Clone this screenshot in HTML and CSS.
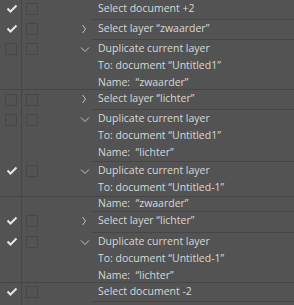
FILE: index.html
```html
<!DOCTYPE html>
<html lang="en">
<head>
    <meta charset="UTF-8">
    <title>Actions</title>
    <link rel="stylesheet" href="styles.css">
</head>
<body>
    <div class="panel">
        <div class="row">
            <div class="chk"><svg class="tick" width="12" height="10" viewBox="0 0 12 10"><polyline points="1.5,4.5 4.5,7.5 10.5,1.5"/></svg></div>
            <div class="mark"><span class="box b2"></span></div>
            <div class="tog"></div>
            <div class="body h19"><div class="line">Select document +2</div></div>
        </div>
        <div class="row">
            <div class="chk"><svg class="tick" width="12" height="10" viewBox="0 0 12 10"><polyline points="1.5,4.5 4.5,7.5 10.5,1.5"/></svg></div>
            <div class="mark"><span class="box b2"></span></div>
            <div class="tog"><svg class="chev" width="8" height="10" viewBox="0 0 8 10"><polyline points="3.5,1 6.5,5 3.5,9"/></svg></div>
            <div class="body h19"><div class="line">Select layer “zwaarder”</div></div>
        </div>
        <div class="row full">
            <div class="chk"><span class="box b1"></span></div>
            <div class="mark"><span class="box b2"></span></div>
            <div class="tog"><svg class="chev" width="10" height="8" viewBox="0 0 10 8"><polyline points="1,1.5 5,5.5 9,1.5"/></svg></div>
            <div class="body h49">
                <div class="line">Duplicate current layer</div>
                <div class="line">To: document “Untitled1”</div>
                <div class="line">Name:&nbsp; “zwaarder”</div>
            </div>
        </div>
        <div class="row">
            <div class="chk"><span class="box b1 low"></span></div>
            <div class="mark"><span class="box b2 low"></span></div>
            <div class="tog"><svg class="chev" width="8" height="10" viewBox="0 0 8 10"><polyline points="3.5,1 6.5,5 3.5,9"/></svg></div>
            <div class="body h19"><div class="line">Select layer “lichter”</div></div>
        </div>
        <div class="row">
            <div class="chk"><span class="box b1 low"></span></div>
            <div class="mark"><span class="box b2 low"></span></div>
            <div class="tog"><svg class="chev" width="10" height="8" viewBox="0 0 10 8"><polyline points="1,1.5 5,5.5 9,1.5"/></svg></div>
            <div class="body h51">
                <div class="line">Duplicate current layer</div>
                <div class="line">To: document “Untitled1”</div>
                <div class="line">Name:&nbsp; “lichter”</div>
            </div>
        </div>
        <div class="row full">
            <div class="chk"><svg class="tick" width="12" height="10" viewBox="0 0 12 10"><polyline points="1.5,4.5 4.5,7.5 10.5,1.5"/></svg></div>
            <div class="mark"><span class="box b2"></span></div>
            <div class="tog"><svg class="chev" width="10" height="8" viewBox="0 0 10 8"><polyline points="1,1.5 5,5.5 9,1.5"/></svg></div>
            <div class="body h34">
                <div class="line">Duplicate current layer</div>
                <div class="line">To: document “Untitled-1”</div>
            </div>
        </div>
        <div class="row">
            <div class="chk"></div>
            <div class="mark"></div>
            <div class="tog"></div>
            <div class="body h14"><div class="line tight">Name:&nbsp; “zwaarder”</div></div>
        </div>
        <div class="row">
            <div class="chk"><svg class="tick" width="12" height="10" viewBox="0 0 12 10"><polyline points="1.5,4.5 4.5,7.5 10.5,1.5"/></svg></div>
            <div class="mark"><span class="box b2"></span></div>
            <div class="tog"><svg class="chev" width="8" height="10" viewBox="0 0 8 10"><polyline points="3.5,1 6.5,5 3.5,9"/></svg></div>
            <div class="body h20"><div class="line">Select layer “lichter”</div></div>
        </div>
        <div class="row full">
            <div class="chk"><svg class="tick" width="12" height="10" viewBox="0 0 12 10"><polyline points="1.5,4.5 4.5,7.5 10.5,1.5"/></svg></div>
            <div class="mark"><span class="box b2"></span></div>
            <div class="tog"><svg class="chev" width="10" height="8" viewBox="0 0 10 8"><polyline points="1,1.5 5,5.5 9,1.5"/></svg></div>
            <div class="body h49">
                <div class="line">Duplicate current layer</div>
                <div class="line">To: document “Untitled-1”</div>
                <div class="line">Name:&nbsp; “lichter”</div>
            </div>
        </div>
        <div class="row">
            <div class="chk"><svg class="tick" width="12" height="10" viewBox="0 0 12 10"><polyline points="1.5,4.5 4.5,7.5 10.5,1.5"/></svg></div>
            <div class="mark"><span class="box b2"></span></div>
            <div class="tog"></div>
            <div class="body h18"><div class="line">Select document -2</div></div>
        </div>
        <div class="row rest">
            <div class="chk"></div>
            <div class="mark"></div>
            <div class="tog"></div>
            <div class="body"></div>
        </div>
    </div>
</body>
</html>
```

FILE: styles.css
```css
body {
    margin: 0;
    background-color: #535353;
    font-family: "Open Sans", "Liberation Sans", sans-serif;
    font-size: 10.5px;
    color: #d8d8d8;
}
.panel {
    width: 294px;
    height: 305px;
    overflow: hidden;
}
.row {
    display: flex;
}
.row.full {
    border-bottom: 1px solid #464646;
}
.row.rest {
    height: 10px;
}
.chk {
    width: 21px;
    border-right: 1px solid #464646;
}
.mark {
    width: 56px;
}
.tog {
    width: 14px;
}
.body {
    flex: 1;
    padding-left: 6px;
    border-bottom: 1px solid #464646;
}
.row.full .body {
    border-bottom: none;
}
.h14 { height: 14px; }
.h18 { height: 18px; }
.h19 { height: 19px; }
.h20 { height: 20px; }
.h34 { height: 34px; }
.h49 { height: 49px; }
.h51 { height: 51px; }
.line {
    line-height: 17px;
    white-space: nowrap;
}
.line.tight {
    line-height: 13px;
}
.box {
    display: block;
    width: 10px;
    height: 10px;
    border: 1px solid #474747;
    margin-top: 3px;
}
.box.b1 {
    margin-left: 5px;
}
.box.b2 {
    margin-left: 4px;
}
.box.low {
    margin-top: 4px;
}
.tick {
    display: block;
    margin: 4px 0 0 6px;
    fill: none;
    stroke: #e6e6e6;
    stroke-width: 2;
}
.chev {
    display: block;
    fill: none;
    stroke: #c4c4c4;
    stroke-width: 1;
}
.tog svg[width="8"] {
    margin: 4px 0 0 1px;
}
.tog svg[width="10"] {
    margin: 6px 0 0 2px;
}
```
